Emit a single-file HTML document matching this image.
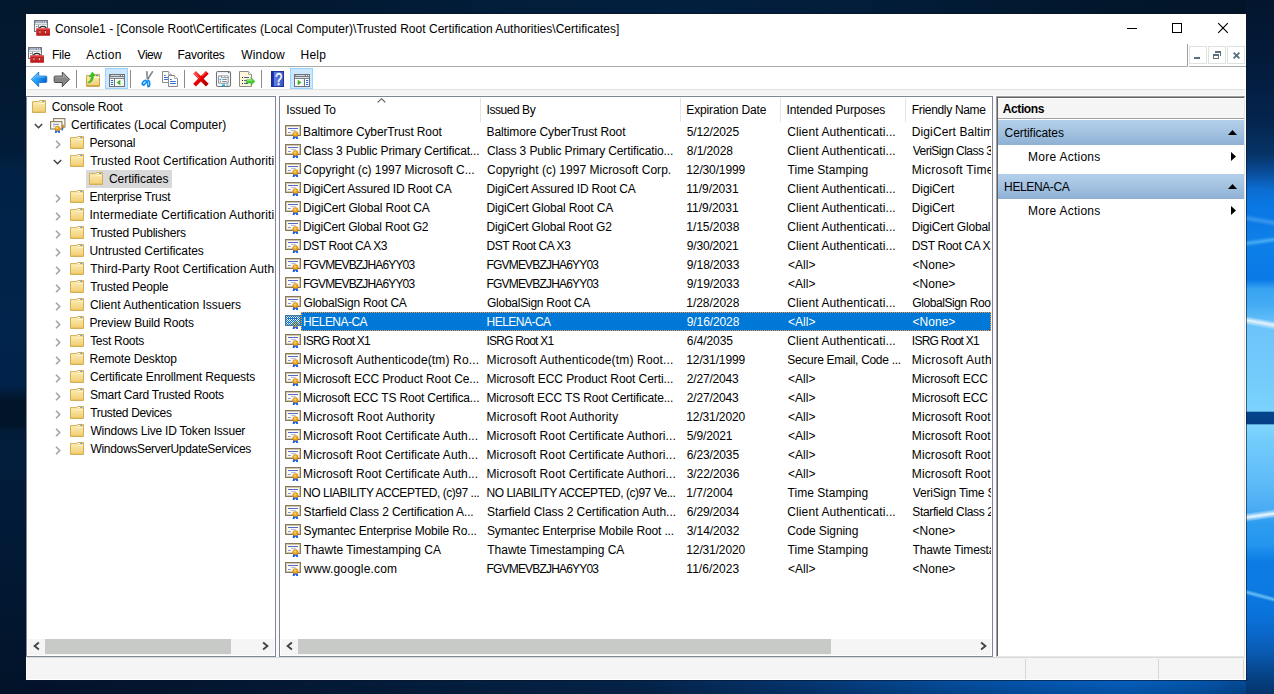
<!DOCTYPE html><html><head><meta charset="utf-8"><title>Console1</title><style>
html,body{margin:0;padding:0}
body{width:1274px;height:694px;overflow:hidden;position:relative;background:#02152b;font:12px "Liberation Sans",sans-serif;color:#000}
div,span,svg{position:absolute;box-sizing:border-box}
.t{white-space:pre;line-height:16px;height:16px}
.w{color:#fff}
.b{font-weight:bold}
.i{overflow:visible}
#bgT{left:0;top:0;width:1274px;height:14px;background:linear-gradient(90deg,#02182d 0,#02172c 200px,#021b36 400px,#021e3b 520px,#021f3e 700px,#021c38 900px,#02172c 1100px,#021428 1274px)}
#bgL{left:0;top:0;width:26px;height:694px;background:linear-gradient(180deg,#02182d 0,#021a33 100px,#021c3a 150px,#012246 175px,#012349 250px,#01244c 340px,#01224a 385px,#01172e 398px,#011427 402px,#011528 425px,#021c38 432px,#021d3c 445px,#021a36 550px,#02152c 650px,#021328 694px)}
#bgB{left:0;top:680px;width:1274px;height:14px;background:linear-gradient(180deg,rgba(0,0,0,0) 0,rgba(0,10,30,.18) 100%),linear-gradient(90deg,#03122a 0,#031a36 300px,#04244a 640px,#053670 800px,#054e9e 950px,#0459b4 1050px,#045fbe 1130px,#0457ae 1200px,#054a96 1246px,#043e7e 1274px)}
#bgR{left:1246px;top:0;width:28px;height:694px;overflow:hidden;background:linear-gradient(180deg,#04162e 0,#031a3a 60px,#04244e 120px,#063468 155px,#0a4c98 172px,#0c6cd0 189px,#0a78e4 206px,#0c7ae6 225px,#0e80e8 240px,#0c7ee8 255px,#0a7ae6 280px,#3aa4f2 289px,#44acf4 305px,#5cbaf7 318px,#6cc4fa 328px,#74ccfc 380px,#7ad2fd 410px,#80d4fd 411px,#04448c 412.5px,#053f85 423.5px,#82d6fe 425px,#72ccfc 440px,#60bcf8 480px,#4cacf4 508px,#38a2f1 518px,#2c9cf0 524px,#2496ee 545px,#1688ea 553px,#0c7ce4 562px,#0c7ae2 590px,#0a76de 601px,#0a74dc 612px,#0a68cc 632px,#0a5cb4 650px,#08509f 662px,#064488 675px,#053a78 685px,#04336c 694px)}
.sk{left:-4px;width:40px;transform-origin:4px 50%}
#win{left:26px;top:14px;width:1220px;height:666px;background:#fff;box-shadow:0 0 0 1px rgba(10,20,40,.6)}
</style></head><body>
<svg width="0" height="0" style="position:absolute">
<linearGradient id="gf" x1="0" y1="0" x2="0" y2="1"><stop offset="0" stop-color="#fdf0bd"/><stop offset="1" stop-color="#f0cc6e"/></linearGradient>
<linearGradient id="gb" x1="0" y1="0" x2="1" y2=".5"><stop offset="0" stop-color="#52bcff"/><stop offset=".5" stop-color="#22a0f6"/><stop offset="1" stop-color="#0660cc"/></linearGradient>
<linearGradient id="gg" x1="0" y1="0" x2="0" y2="1"><stop offset="0" stop-color="#a2a2a2"/><stop offset=".5" stop-color="#848484"/><stop offset="1" stop-color="#8e8e8e"/></linearGradient>
<linearGradient id="gr" x1="0" y1="0" x2="1" y2="1"><stop offset="0" stop-color="#ff4a4a"/><stop offset=".5" stop-color="#e60000"/><stop offset="1" stop-color="#a80000"/></linearGradient>
<linearGradient id="gh" x1="0" y1="0" x2="1" y2="0"><stop offset="0" stop-color="#1a2c9c"/><stop offset=".22" stop-color="#1f35b0"/><stop offset=".24" stop-color="#5d7fe6"/><stop offset="1" stop-color="#3453c8"/></linearGradient>
<linearGradient id="gt" x1="0" y1="0" x2="0" y2="1"><stop offset="0" stop-color="#e43a3a"/><stop offset="1" stop-color="#b81414"/></linearGradient>
<linearGradient id="ga" x1="0" y1="0" x2="0" y2="1"><stop offset="0" stop-color="#b0cdea"/><stop offset=".5" stop-color="#a3c3e4"/><stop offset="1" stop-color="#8caed5"/></linearGradient>
</svg>
<div id="bgT"></div><div id="bgB"></div><div id="bgL"></div><div id="bgR"><div class="sk" style="top:214px;height:8px;background:linear-gradient(180deg,rgba(70,160,240,0),rgba(70,160,240,.75) 50%,rgba(70,160,240,0));transform:skewY(10deg)"></div><div class="sk" style="top:240px;height:7px;background:linear-gradient(180deg,rgba(84,180,246,0),rgba(84,180,246,.8) 50%,rgba(84,180,246,0));transform:skewY(-8deg)"></div><div class="sk" style="top:316px;height:9px;background:linear-gradient(180deg,rgba(235,247,255,0),rgba(235,247,255,.95) 45%,rgba(235,247,255,0));transform:skewY(10deg)"></div><div class="sk" style="top:513px;height:9px;background:linear-gradient(180deg,rgba(240,250,255,0),rgba(240,250,255,.97) 50%,rgba(240,250,255,0));transform:skewY(-8deg)"></div><div class="sk" style="top:589px;height:6px;background:linear-gradient(180deg,rgba(120,200,250,0),rgba(120,200,250,.85) 50%,rgba(120,200,250,0));transform:skewY(15deg)"></div></div>
<div id="win"></div>
<svg class="i" style="left:34px;top:20px" width="16" height="16" viewBox="0 0 16 16" ><rect x=".5" y=".5" width="13" height="11" fill="#f6f7f9" stroke="#6f7780"/><rect x="1" y="1" width="12" height="2" fill="#8794aa"/><rect x="2" y="1.6" width="6" height=".8" fill="#dfe4ec"/><rect x="9" y="1.5" width="1" height="1" fill="#fff"/><rect x="11" y="1.5" width="1" height="1" fill="#fff"/><rect x="1" y="3" width="12" height="1" fill="#e3e6ea"/><rect x="1" y="4" width="12" height=".7" fill="#a7aeb8"/><rect x="4" y="4.7" width="1" height="6.3" fill="#8d96a0"/><rect x="2" y="6" width="1.4" height="1" fill="#6f7780"/><path d="M5.6 8.6Q5.6 6.4 8.9 6.4Q12.2 6.4 12.2 8.6" fill="none" stroke="#2c2c2c" stroke-width="1.2"/><rect x="2.2" y="8.3" width="13.8" height="7.5" rx=".7" fill="url(#gt)"/><rect x="2.4" y="8.4" width="13.4" height="1" fill="#e85a5a" opacity=".8"/><rect x="2.2" y="10.4" width="13.8" height=".6" fill="#9c1010" opacity=".7"/><rect x="5.3" y="10.6" width="1.2" height="2.7" fill="#e4e4e4" stroke="#7a1414" stroke-width=".3"/><rect x="10.9" y="10.6" width="1.2" height="2.7" fill="#e4e4e4" stroke="#7a1414" stroke-width=".3"/></svg>
<div style="left:1127px;top:28px;width:10px;height:1px;background:#000;"></div>
<div style="left:1172px;top:23px;width:10px;height:10px;background:transparent;border:1px solid #000"></div>
<svg class="i" style="left:1218px;top:23px" width="10" height="10" viewBox="0 0 10 10" ><path d="M.2 .2L9.8 9.8M9.8 .2L.2 9.8" stroke="#000" stroke-width="1.15"/></svg>
<svg class="i" style="left:28px;top:47px" width="16" height="16" viewBox="0 0 16 16" ><rect x=".5" y=".5" width="13" height="11" fill="#f6f7f9" stroke="#6f7780"/><rect x="1" y="1" width="12" height="2" fill="#8794aa"/><rect x="2" y="1.6" width="6" height=".8" fill="#dfe4ec"/><rect x="9" y="1.5" width="1" height="1" fill="#fff"/><rect x="11" y="1.5" width="1" height="1" fill="#fff"/><rect x="1" y="3" width="12" height="1" fill="#e3e6ea"/><rect x="1" y="4" width="12" height=".7" fill="#a7aeb8"/><rect x="4" y="4.7" width="1" height="6.3" fill="#8d96a0"/><rect x="2" y="6" width="1.4" height="1" fill="#6f7780"/><path d="M5.6 8.6Q5.6 6.4 8.9 6.4Q12.2 6.4 12.2 8.6" fill="none" stroke="#2c2c2c" stroke-width="1.2"/><rect x="2.2" y="8.3" width="13.8" height="7.5" rx=".7" fill="url(#gt)"/><rect x="2.4" y="8.4" width="13.4" height="1" fill="#e85a5a" opacity=".8"/><rect x="2.2" y="10.4" width="13.8" height=".6" fill="#9c1010" opacity=".7"/><rect x="5.3" y="10.6" width="1.2" height="2.7" fill="#e4e4e4" stroke="#7a1414" stroke-width=".3"/><rect x="10.9" y="10.6" width="1.2" height="2.7" fill="#e4e4e4" stroke="#7a1414" stroke-width=".3"/></svg>
<div style="left:26px;top:66px;width:1220px;height:1px;background:#a9ada9;"></div>
<div style="left:1187px;top:44px;width:1px;height:22px;background:#a0a0a0;"></div>
<div style="left:1188px;top:66px;width:1px;height:1px;background:#fff;"></div>
<div style="left:1189px;top:46px;width:18px;height:18px;background:#fff;border:1px solid #dde3de"></div>
<div style="left:1208px;top:46px;width:18px;height:18px;background:#fff;border:1px solid #dde3de"></div>
<div style="left:1227px;top:46px;width:18px;height:18px;background:#fff;border:1px solid #dde3de"></div>
<div style="left:1194px;top:57px;width:6px;height:2px;background:#5b6e7c;"></div>
<svg class="i" style="left:1213px;top:51px" width="8" height="8" viewBox="0 0 8 8" ><rect x="2" y="0" width="6" height="2" fill="#5b6e7c"/><rect x="7" y="0" width="1" height="5" fill="#5b6e7c"/><rect x="0" y="3" width="6" height="2" fill="#5b6e7c"/><rect x="0" y="3" width="1" height="5" fill="#5b6e7c"/><rect x="5" y="3" width="1" height="5" fill="#5b6e7c"/><rect x="0" y="7" width="6" height="1" fill="#5b6e7c"/></svg>
<svg class="i" style="left:1233px;top:52px" width="7" height="7" viewBox="0 0 7 7" ><path d="M.6 .6L6.4 6.4M6.4 .6L.6 6.4" stroke="#5b6e7c" stroke-width="1.8"/></svg>
<div style="left:27px;top:89px;width:1218px;height:1px;background:#dfe2df;"></div>
<div style="left:27px;top:90px;width:1218px;height:6px;background:#f5f5f5;"></div>
<svg class="i" style="left:31px;top:71px" width="16" height="16" viewBox="0 0 16 16" ><path d="M.4 8.3L7.7 1V5.1H14.8Q15.8 5.1 15.8 6.1V10.5Q15.8 11.5 14.8 11.5H7.7V15.7Z" fill="url(#gb)" stroke="#1b78d4" stroke-width=".9" stroke-linejoin="round"/><path d="M2 8.3L6.8 3.4V6H14.4" fill="none" stroke="#8fd2ff" stroke-width=".8" opacity=".85"/></svg>
<svg class="i" style="left:54px;top:71px" width="16" height="16" viewBox="0 0 16 16" ><path d="M15.6 8.3L8.3 1V5.1H1.2Q.2 5.1 .2 6.1V10.5Q.2 11.5 1.2 11.5H8.3V15.7Z" fill="url(#gg)" stroke="#484848" stroke-width="1" stroke-linejoin="round"/><path d="M1.4 6.1H9.2V3.4L14 8.3" fill="none" stroke="#c8c8c8" stroke-width=".7" opacity=".6"/></svg>
<div style="left:76px;top:70px;width:1px;height:18px;background:#8a8a8a;"></div>
<div style="left:130px;top:70px;width:1px;height:18px;background:#8a8a8a;"></div>
<div style="left:184px;top:70px;width:1px;height:18px;background:#8a8a8a;"></div>
<div style="left:261px;top:70px;width:1px;height:18px;background:#8a8a8a;"></div>
<svg class="i" style="left:86px;top:71px" width="16" height="16" viewBox="0 0 16 16" ><path d="M.5 4.5H7.8L8.8 3.3H13.5V15.3H.5Z" fill="url(#gf)" stroke="#cfa54c"/><path d="M1 14.8H13" stroke="#b98d33" stroke-width=".8"/><rect x="7.5" y="6" width="6" height=".9" fill="#fff6d2"/><rect x="9.7" y="4" width="2.6" height="1.1" fill="#3a8fe6"/><rect x="8.9" y="4" width="1" height="1.1" fill="#fff"/><path d="M1.8 11.4C4.4 10.6 5.3 8 5.2 5.3L3.2 5.9L6.3 .9L9.3 4.4L7.4 4.7C7.6 8.6 5.6 11.6 2.4 12Z" fill="#35c821" stroke="#2aa418" stroke-width=".5"/></svg>
<div style="left:105px;top:68px;width:23px;height:21px;background:#cce8ff;border:1px solid #99d1ff"></div>
<svg class="i" style="left:109px;top:74px" width="16" height="13" viewBox="0 0 16 13" ><rect x=".5" y=".5" width="15" height="12" fill="#fff" stroke="#6e7378"/><rect x="1" y="1" width="14" height="2" fill="#737b84"/><rect x="1.6" y="1.1" width="9.2" height=".9" fill="#dfe3e8"/><rect x="12" y="1" width="1" height="1" fill="#fff"/><rect x="14" y="1" width="1" height="1" fill="#fff"/><rect x="1" y="3" width="14" height="1" fill="#dadee4"/><rect x="1" y="4" width="14" height="1" fill="#7c838b"/><rect x="5" y="5" width="1" height="7" fill="#6e7378"/><rect x="1.8" y="6" width="2.4" height="1" fill="#2a6ad0"/><rect x="1.8" y="8" width="2.4" height="1" fill="#2a6ad0"/><rect x="1.8" y="10" width="2.4" height="1" fill="#2a6ad0"/><rect x="13" y="5" width="2" height="7" fill="#f1f1f1"/><path d="M11.2 5.9V11.1L7.8 8.5Z" fill="#3ab422" stroke="#2c9c18" stroke-width=".3"/></svg>
<svg class="i" style="left:142px;top:71px" width="12" height="16" viewBox="0 0 12 16" ><path d="M10.7 .4L5.6 8.4" stroke="#59606a" stroke-width="1.5" fill="none"/><path d="M10.5 .9L6.4 7.3" stroke="#f2f4f7" stroke-width=".7" stroke-dasharray=".9 .9"/><path d="M4.9 .3L5.5 8.4" stroke="#6c737c" stroke-width="1.7" fill="none"/><path d="M5.2 .6L5.7 7.6" stroke="#c9d0d8" stroke-width=".5" fill="none"/><ellipse cx="2.3" cy="11.6" rx="1.35" ry="2.6" transform="rotate(40 2.3 11.6)" fill="#fff" stroke="#1290f2" stroke-width="1.7"/><ellipse cx="6.6" cy="12.4" rx="1.1" ry="2.9" transform="rotate(-4 6.6 12.4)" fill="#fff" stroke="#1290f2" stroke-width="1.6"/><path d="M5 15.6Q6.6 16.4 7.9 15.2" fill="none" stroke="#0a5cae" stroke-width=".8"/><path d="M.4 13.2Q1.4 14.6 3 13.9" fill="none" stroke="#0a5cae" stroke-width=".7"/></svg>
<svg class="i" style="left:162px;top:71px" width="16" height="16" viewBox="0 0 16 16" ><path d="M0.5 0.5H6.5L9.5 3.5V11.5H0.5Z" fill="#fff" stroke="#8a8a8a"/><path d="M6.5 0.5V3.5H9.5" fill="#fff" stroke="#9a9a9a" stroke-width=".8"/><rect x="2" y="4" width="1.8" height="1" fill="#3a72d0"/><rect x="2" y="6" width="4.2" height="1" fill="#3a72d0"/><rect x="2" y="8" width="4.2" height="1" fill="#3a72d0"/><path d="M6.5 4.5H12.5L15.5 7.5V15.5H6.5Z" fill="#fff" stroke="#8a8a8a"/><path d="M12.5 4.5V7.5H15.5" fill="#fff" stroke="#9a9a9a" stroke-width=".8"/><rect x="8" y="8" width="1.8" height="1" fill="#3a72d0"/><rect x="8" y="10" width="5.8" height="1" fill="#3a72d0"/><rect x="8" y="12" width="5.8" height="1" fill="#3a72d0"/></svg>
<svg class="i" style="left:193px;top:71px" width="16" height="16" viewBox="0 0 16 16" ><path d="M1.5 1.4L14.3 14.1M14.3 1.4L1.5 14.1" stroke="url(#gr)" stroke-width="3.9"/><path d="M1.6 2.6L6.4 7.4M13 1.4L9.4 5" stroke="#ff9a9a" stroke-width=".9" opacity=".75"/></svg>
<svg class="i" style="left:216px;top:71px" width="15" height="16" viewBox="0 0 15 16" ><rect x=".5" y=".5" width="14" height="15" rx="1.6" fill="#fff" stroke="#6d727c" stroke-width="1.1"/><rect x="1.2" y="1.2" width="12.6" height=".9" fill="#e7ecf2"/><rect x="1.2" y="2.2" width="12.6" height=".8" fill="#f0f2f5"/><rect x="12" y="1" width="1.4" height="1.2" fill="#4a67b0"/><path d="M2.6 4.9H12.2V12.2H2.6Z" fill="#fafbfc" stroke="#7d838c" stroke-width=".9"/><path d="M5.5 4.9V6.6H12.2" fill="none" stroke="#7d838c" stroke-width=".9"/><rect x="6.3" y="5.3" width="2.2" height=".9" fill="#fff"/><rect x="9.3" y="5.3" width="2.2" height=".9" fill="#fff"/><rect x="8.6" y="4.9" width=".7" height="1.6" fill="#9aa0a8"/><circle cx="4.4" cy="8.5" r=".85" fill="#10a8f8"/><circle cx="4.4" cy="10.5" r=".6" fill="#8a8f8f"/><rect x="6.2" y="8" width="4.7" height="1" fill="#8a8f8f"/><rect x="6.2" y="10" width="4.7" height="1" fill="#8a8f8f"/><rect x="6" y="13.3" width="3" height="1.8" fill="#16b6f2"/><rect x="10.2" y="13.3" width="2.4" height="1.8" fill="#b9bcbc"/></svg>
<svg class="i" style="left:239px;top:71px" width="17" height="16" viewBox="0 0 17 16" ><path d="M.5 .5H9.5L12.5 3.5V15.5H.5Z" fill="#fdf8dc" stroke="#8c8c88"/><path d="M9.5 .5V3.5H12.5" fill="#fff" stroke="#9a9a96" stroke-width=".8"/><rect x="3" y="6" width="1" height="1" fill="#222"/><rect x="3" y="9" width="1" height="1" fill="#222"/><rect x="3" y="12" width="1" height="1" fill="#222"/><rect x="5" y="6" width="5" height="1" fill="#5a5aa8"/><rect x="5" y="9" width="3" height="1" fill="#5a5aa8"/><rect x="5" y="12" width="4" height="1" fill="#5a5aa8"/><path d="M7.2 8.8H12V6.4L16 10.4L12 14.2V12H7.2Z" fill="#48c832" stroke="#38b024" stroke-width=".5"/><path d="M8 9.6H12.6V8.2" fill="none" stroke="#a8ee98" stroke-width=".7"/></svg>
<svg class="i" style="left:271px;top:71px" width="13" height="16" viewBox="0 0 13 16" ><rect x="0" y="0" width="13" height="16" fill="url(#gh)"/><rect x=".4" y=".4" width="12.2" height="15.2" fill="none" stroke="#1a2a8a" stroke-width=".8"/><text x="8.2" y="14.3" font-family="Liberation Sans, sans-serif" font-size="16.5" fill="#1c2c80" text-anchor="middle" opacity=".5" transform="translate(8.2 0) scale(.76 1) translate(-8.2 0)">?</text><text x="7.7" y="13.9" font-family="Liberation Sans, sans-serif" font-size="16.5" fill="#fff" stroke="#fff" stroke-width=".5" text-anchor="middle" transform="translate(7.7 0) scale(.76 1) translate(-7.7 0)">?</text></svg>
<div style="left:290px;top:68px;width:23px;height:21px;background:#cce8ff;border:1px solid #99d1ff"></div>
<svg class="i" style="left:294px;top:74px" width="16" height="13" viewBox="0 0 16 13" ><rect x=".5" y=".5" width="15" height="12" fill="#fff" stroke="#6e7378"/><rect x="1" y="1" width="14" height="2" fill="#737b84"/><rect x="1.6" y="1.1" width="9.2" height=".9" fill="#dfe3e8"/><rect x="12" y="1" width="1" height="1" fill="#fff"/><rect x="14" y="1" width="1" height="1" fill="#fff"/><rect x="1" y="3" width="14" height="1" fill="#dadee4"/><rect x="1" y="4" width="14" height="1" fill="#7c838b"/><rect x="10" y="5" width="1" height="7" fill="#6e7378"/><rect x="12" y="6" width="2.3" height="1" fill="#2a6ad0"/><rect x="12" y="8" width="2.3" height="1" fill="#2a6ad0"/><rect x="12" y="10" width="2.3" height="1" fill="#2a6ad0"/><rect x="8" y="5" width="2" height="7" fill="#f1f1f1"/><path d="M3.9 5.9V11.1L7.2 8.5Z" fill="#3ab422" stroke="#2c9c18" stroke-width=".3"/></svg>
<div style="left:27px;top:95px;width:1218px;height:562px;background:#fafafa;"></div>
<div style="left:26px;top:96px;width:250px;height:561px;background:#fff;border:1px solid #7f8697"></div>
<div style="left:279px;top:96px;width:714px;height:561px;background:#fff;border:1px solid #7f8697"></div>
<div style="left:996px;top:96px;width:249px;height:561px;background:#fff;border-left:1px solid #a0a0a0;border-top:1px solid #a0a0a0;border-bottom:1px solid #e8e8e8"></div>
<div style="left:997px;top:97px;width:248px;height:559px;background:#fff;border-left:1px solid #646464;border-top:1px solid #646464"></div>
<div style="left:1244px;top:97px;width:1px;height:559px;background:#e3e3e3;"></div>
<div style="left:27px;top:657px;width:1218px;height:1px;background:#d5dcd6;"></div>
<div style="left:27px;top:658px;width:1218px;height:21px;background:#f5f5f5;"></div>
<div style="left:1025px;top:659px;width:1px;height:20px;background:#d3d9d4;"></div>
<div style="left:1158px;top:659px;width:1px;height:20px;background:#d3d9d4;"></div>
<div style="left:1243px;top:659px;width:1px;height:20px;background:#d3d9d4;"></div>
<div style="left:28px;top:639px;width:246px;height:16px;background:#f5f5f5;"></div>
<div style="left:45px;top:639px;width:186px;height:15px;background:#c8cac7;"></div>
<svg class="i" style="left:32.5px;top:642.3px" width="7" height="8" viewBox="0 0 7 8" ><path d="M5.9 .5L1.6 4L5.9 7.5" fill="none" stroke="#444" stroke-width="1.9"/></svg>
<svg class="i" style="left:262.2px;top:642.3px" width="7" height="8" viewBox="0 0 7 8" ><path d="M1.1 .5L5.4 4L1.1 7.5" fill="none" stroke="#444" stroke-width="1.9"/></svg>
<div style="left:281px;top:639px;width:710px;height:16px;background:#f5f5f5;"></div>
<div style="left:298px;top:639px;width:533px;height:15px;background:#c8cac7;"></div>
<svg class="i" style="left:285.5px;top:642.3px" width="7" height="8" viewBox="0 0 7 8" ><path d="M5.9 .5L1.6 4L5.9 7.5" fill="none" stroke="#444" stroke-width="1.9"/></svg>
<svg class="i" style="left:979.5px;top:642.3px" width="7" height="8" viewBox="0 0 7 8" ><path d="M1.1 .5L5.4 4L1.1 7.5" fill="none" stroke="#444" stroke-width="1.9"/></svg>
<div style="left:86px;top:170px;width:86px;height:18px;background:#d9d9d9;"></div>
<svg class="i" style="left:32px;top:100px" width="14" height="13" viewBox="0 0 14 13" ><path d="M.5 1.6H6.4L7.4 .5H13.5V12.5H.5Z" fill="url(#gf)" stroke="#d3ae57"/><rect x="7.3" y="1" width="5.7" height="1.9" fill="#efd385"/><rect x="6.8" y="2.8" width="6.2" height=".8" fill="#fff7d8"/><rect x="8" y="1" width="2.6" height=".9" fill="#fff"/><rect x="10.3" y="1" width="1.7" height=".9" fill="#3a8fe6"/><rect x="1" y="11.4" width="12" height=".7" fill="#e6bd5c"/></svg>
<svg class="i" style="left:50px;top:118px" width="16" height="15" viewBox="0 0 16 15" ><rect x="3.6" y=".6" width="11.3" height="8.4" fill="#fcfbf5" stroke="#8b7c5e" stroke-width="1.1"/><circle cx="12.6" cy="8.4" r="1.9" fill="#e69a18"/><path d="M11.6 9.5L11.4 12.5H12.6L13.6 9.5Z" fill="#1c5ce6"/><rect x=".6" y="3.6" width="11.3" height="7.4" fill="#fbfaf2" stroke="#8b7c5e" stroke-width="1.1"/><path d="M3 6.3H9" stroke="#6a7ccc" stroke-width=".9"/><path d="M3 8.2H5.2" stroke="#9aa6da" stroke-width=".9"/><path d="M5.4 11L5 15H6.4L7.5 13.3L8.6 15H10L9.6 11Z" fill="#1c5ce6"/><circle cx="7.5" cy="10.5" r="2.5" fill="#efa21a" stroke="#c88414" stroke-width=".5"/><circle cx="7.2" cy="10" r="1" fill="#f9d063"/></svg>
<svg class="i" style="left:34.0px;top:123px" width="9" height="6" viewBox="0 0 9 6" ><path d="M.8 1L4.5 4.7L8.2 1" fill="none" stroke="#404040" stroke-width="1.5"/></svg>
<svg class="i" style="left:70px;top:136px" width="14" height="13" viewBox="0 0 14 13" ><path d="M.5 1.6H6.4L7.4 .5H13.5V12.5H.5Z" fill="url(#gf)" stroke="#d3ae57"/><rect x="7.3" y="1" width="5.7" height="1.9" fill="#efd385"/><rect x="6.8" y="2.8" width="6.2" height=".8" fill="#fff7d8"/><rect x="8" y="1" width="2.6" height=".9" fill="#fff"/><rect x="10.3" y="1" width="1.7" height=".9" fill="#3a8fe6"/><rect x="1" y="11.4" width="12" height=".7" fill="#e6bd5c"/></svg>
<svg class="i" style="left:54.7px;top:139.9px" width="6" height="9" viewBox="0 0 6 9" ><path d="M1 .8L4.7 4.5L1 8.2" fill="none" stroke="#a2a5a2" stroke-width="1.6"/></svg>
<svg class="i" style="left:70px;top:154px" width="14" height="13" viewBox="0 0 14 13" ><path d="M.5 1.6H6.4L7.4 .5H13.5V12.5H.5Z" fill="url(#gf)" stroke="#d3ae57"/><rect x="7.3" y="1" width="5.7" height="1.9" fill="#efd385"/><rect x="6.8" y="2.8" width="6.2" height=".8" fill="#fff7d8"/><rect x="8" y="1" width="2.6" height=".9" fill="#fff"/><rect x="10.3" y="1" width="1.7" height=".9" fill="#3a8fe6"/><rect x="1" y="11.4" width="12" height=".7" fill="#e6bd5c"/></svg>
<svg class="i" style="left:53.2px;top:159px" width="9" height="6" viewBox="0 0 9 6" ><path d="M.8 1L4.5 4.7L8.2 1" fill="none" stroke="#404040" stroke-width="1.5"/></svg>
<svg class="i" style="left:89px;top:172px" width="14" height="13" viewBox="0 0 14 13" ><path d="M.5 1.6H6.4L7.4 .5H13.5V12.5H.5Z" fill="url(#gf)" stroke="#d3ae57"/><rect x="7.3" y="1" width="5.7" height="1.9" fill="#efd385"/><rect x="6.8" y="2.8" width="6.2" height=".8" fill="#fff7d8"/><rect x="8" y="1" width="2.6" height=".9" fill="#fff"/><rect x="10.3" y="1" width="1.7" height=".9" fill="#3a8fe6"/><rect x="1" y="11.4" width="12" height=".7" fill="#e6bd5c"/></svg>
<svg class="i" style="left:70px;top:190px" width="14" height="13" viewBox="0 0 14 13" ><path d="M.5 1.6H6.4L7.4 .5H13.5V12.5H.5Z" fill="url(#gf)" stroke="#d3ae57"/><rect x="7.3" y="1" width="5.7" height="1.9" fill="#efd385"/><rect x="6.8" y="2.8" width="6.2" height=".8" fill="#fff7d8"/><rect x="8" y="1" width="2.6" height=".9" fill="#fff"/><rect x="10.3" y="1" width="1.7" height=".9" fill="#3a8fe6"/><rect x="1" y="11.4" width="12" height=".7" fill="#e6bd5c"/></svg>
<svg class="i" style="left:54.7px;top:193.9px" width="6" height="9" viewBox="0 0 6 9" ><path d="M1 .8L4.7 4.5L1 8.2" fill="none" stroke="#a2a5a2" stroke-width="1.6"/></svg>
<svg class="i" style="left:70px;top:208px" width="14" height="13" viewBox="0 0 14 13" ><path d="M.5 1.6H6.4L7.4 .5H13.5V12.5H.5Z" fill="url(#gf)" stroke="#d3ae57"/><rect x="7.3" y="1" width="5.7" height="1.9" fill="#efd385"/><rect x="6.8" y="2.8" width="6.2" height=".8" fill="#fff7d8"/><rect x="8" y="1" width="2.6" height=".9" fill="#fff"/><rect x="10.3" y="1" width="1.7" height=".9" fill="#3a8fe6"/><rect x="1" y="11.4" width="12" height=".7" fill="#e6bd5c"/></svg>
<svg class="i" style="left:54.7px;top:211.9px" width="6" height="9" viewBox="0 0 6 9" ><path d="M1 .8L4.7 4.5L1 8.2" fill="none" stroke="#a2a5a2" stroke-width="1.6"/></svg>
<svg class="i" style="left:70px;top:226px" width="14" height="13" viewBox="0 0 14 13" ><path d="M.5 1.6H6.4L7.4 .5H13.5V12.5H.5Z" fill="url(#gf)" stroke="#d3ae57"/><rect x="7.3" y="1" width="5.7" height="1.9" fill="#efd385"/><rect x="6.8" y="2.8" width="6.2" height=".8" fill="#fff7d8"/><rect x="8" y="1" width="2.6" height=".9" fill="#fff"/><rect x="10.3" y="1" width="1.7" height=".9" fill="#3a8fe6"/><rect x="1" y="11.4" width="12" height=".7" fill="#e6bd5c"/></svg>
<svg class="i" style="left:54.7px;top:229.9px" width="6" height="9" viewBox="0 0 6 9" ><path d="M1 .8L4.7 4.5L1 8.2" fill="none" stroke="#a2a5a2" stroke-width="1.6"/></svg>
<svg class="i" style="left:70px;top:244px" width="14" height="13" viewBox="0 0 14 13" ><path d="M.5 1.6H6.4L7.4 .5H13.5V12.5H.5Z" fill="url(#gf)" stroke="#d3ae57"/><rect x="7.3" y="1" width="5.7" height="1.9" fill="#efd385"/><rect x="6.8" y="2.8" width="6.2" height=".8" fill="#fff7d8"/><rect x="8" y="1" width="2.6" height=".9" fill="#fff"/><rect x="10.3" y="1" width="1.7" height=".9" fill="#3a8fe6"/><rect x="1" y="11.4" width="12" height=".7" fill="#e6bd5c"/></svg>
<svg class="i" style="left:54.7px;top:247.9px" width="6" height="9" viewBox="0 0 6 9" ><path d="M1 .8L4.7 4.5L1 8.2" fill="none" stroke="#a2a5a2" stroke-width="1.6"/></svg>
<svg class="i" style="left:70px;top:262px" width="14" height="13" viewBox="0 0 14 13" ><path d="M.5 1.6H6.4L7.4 .5H13.5V12.5H.5Z" fill="url(#gf)" stroke="#d3ae57"/><rect x="7.3" y="1" width="5.7" height="1.9" fill="#efd385"/><rect x="6.8" y="2.8" width="6.2" height=".8" fill="#fff7d8"/><rect x="8" y="1" width="2.6" height=".9" fill="#fff"/><rect x="10.3" y="1" width="1.7" height=".9" fill="#3a8fe6"/><rect x="1" y="11.4" width="12" height=".7" fill="#e6bd5c"/></svg>
<svg class="i" style="left:54.7px;top:265.9px" width="6" height="9" viewBox="0 0 6 9" ><path d="M1 .8L4.7 4.5L1 8.2" fill="none" stroke="#a2a5a2" stroke-width="1.6"/></svg>
<svg class="i" style="left:70px;top:280px" width="14" height="13" viewBox="0 0 14 13" ><path d="M.5 1.6H6.4L7.4 .5H13.5V12.5H.5Z" fill="url(#gf)" stroke="#d3ae57"/><rect x="7.3" y="1" width="5.7" height="1.9" fill="#efd385"/><rect x="6.8" y="2.8" width="6.2" height=".8" fill="#fff7d8"/><rect x="8" y="1" width="2.6" height=".9" fill="#fff"/><rect x="10.3" y="1" width="1.7" height=".9" fill="#3a8fe6"/><rect x="1" y="11.4" width="12" height=".7" fill="#e6bd5c"/></svg>
<svg class="i" style="left:54.7px;top:283.9px" width="6" height="9" viewBox="0 0 6 9" ><path d="M1 .8L4.7 4.5L1 8.2" fill="none" stroke="#a2a5a2" stroke-width="1.6"/></svg>
<svg class="i" style="left:70px;top:298px" width="14" height="13" viewBox="0 0 14 13" ><path d="M.5 1.6H6.4L7.4 .5H13.5V12.5H.5Z" fill="url(#gf)" stroke="#d3ae57"/><rect x="7.3" y="1" width="5.7" height="1.9" fill="#efd385"/><rect x="6.8" y="2.8" width="6.2" height=".8" fill="#fff7d8"/><rect x="8" y="1" width="2.6" height=".9" fill="#fff"/><rect x="10.3" y="1" width="1.7" height=".9" fill="#3a8fe6"/><rect x="1" y="11.4" width="12" height=".7" fill="#e6bd5c"/></svg>
<svg class="i" style="left:54.7px;top:301.9px" width="6" height="9" viewBox="0 0 6 9" ><path d="M1 .8L4.7 4.5L1 8.2" fill="none" stroke="#a2a5a2" stroke-width="1.6"/></svg>
<svg class="i" style="left:70px;top:316px" width="14" height="13" viewBox="0 0 14 13" ><path d="M.5 1.6H6.4L7.4 .5H13.5V12.5H.5Z" fill="url(#gf)" stroke="#d3ae57"/><rect x="7.3" y="1" width="5.7" height="1.9" fill="#efd385"/><rect x="6.8" y="2.8" width="6.2" height=".8" fill="#fff7d8"/><rect x="8" y="1" width="2.6" height=".9" fill="#fff"/><rect x="10.3" y="1" width="1.7" height=".9" fill="#3a8fe6"/><rect x="1" y="11.4" width="12" height=".7" fill="#e6bd5c"/></svg>
<svg class="i" style="left:54.7px;top:319.9px" width="6" height="9" viewBox="0 0 6 9" ><path d="M1 .8L4.7 4.5L1 8.2" fill="none" stroke="#a2a5a2" stroke-width="1.6"/></svg>
<svg class="i" style="left:70px;top:334px" width="14" height="13" viewBox="0 0 14 13" ><path d="M.5 1.6H6.4L7.4 .5H13.5V12.5H.5Z" fill="url(#gf)" stroke="#d3ae57"/><rect x="7.3" y="1" width="5.7" height="1.9" fill="#efd385"/><rect x="6.8" y="2.8" width="6.2" height=".8" fill="#fff7d8"/><rect x="8" y="1" width="2.6" height=".9" fill="#fff"/><rect x="10.3" y="1" width="1.7" height=".9" fill="#3a8fe6"/><rect x="1" y="11.4" width="12" height=".7" fill="#e6bd5c"/></svg>
<svg class="i" style="left:54.7px;top:337.9px" width="6" height="9" viewBox="0 0 6 9" ><path d="M1 .8L4.7 4.5L1 8.2" fill="none" stroke="#a2a5a2" stroke-width="1.6"/></svg>
<svg class="i" style="left:70px;top:352px" width="14" height="13" viewBox="0 0 14 13" ><path d="M.5 1.6H6.4L7.4 .5H13.5V12.5H.5Z" fill="url(#gf)" stroke="#d3ae57"/><rect x="7.3" y="1" width="5.7" height="1.9" fill="#efd385"/><rect x="6.8" y="2.8" width="6.2" height=".8" fill="#fff7d8"/><rect x="8" y="1" width="2.6" height=".9" fill="#fff"/><rect x="10.3" y="1" width="1.7" height=".9" fill="#3a8fe6"/><rect x="1" y="11.4" width="12" height=".7" fill="#e6bd5c"/></svg>
<svg class="i" style="left:54.7px;top:355.9px" width="6" height="9" viewBox="0 0 6 9" ><path d="M1 .8L4.7 4.5L1 8.2" fill="none" stroke="#a2a5a2" stroke-width="1.6"/></svg>
<svg class="i" style="left:70px;top:370px" width="14" height="13" viewBox="0 0 14 13" ><path d="M.5 1.6H6.4L7.4 .5H13.5V12.5H.5Z" fill="url(#gf)" stroke="#d3ae57"/><rect x="7.3" y="1" width="5.7" height="1.9" fill="#efd385"/><rect x="6.8" y="2.8" width="6.2" height=".8" fill="#fff7d8"/><rect x="8" y="1" width="2.6" height=".9" fill="#fff"/><rect x="10.3" y="1" width="1.7" height=".9" fill="#3a8fe6"/><rect x="1" y="11.4" width="12" height=".7" fill="#e6bd5c"/></svg>
<svg class="i" style="left:54.7px;top:373.9px" width="6" height="9" viewBox="0 0 6 9" ><path d="M1 .8L4.7 4.5L1 8.2" fill="none" stroke="#a2a5a2" stroke-width="1.6"/></svg>
<svg class="i" style="left:70px;top:388px" width="14" height="13" viewBox="0 0 14 13" ><path d="M.5 1.6H6.4L7.4 .5H13.5V12.5H.5Z" fill="url(#gf)" stroke="#d3ae57"/><rect x="7.3" y="1" width="5.7" height="1.9" fill="#efd385"/><rect x="6.8" y="2.8" width="6.2" height=".8" fill="#fff7d8"/><rect x="8" y="1" width="2.6" height=".9" fill="#fff"/><rect x="10.3" y="1" width="1.7" height=".9" fill="#3a8fe6"/><rect x="1" y="11.4" width="12" height=".7" fill="#e6bd5c"/></svg>
<svg class="i" style="left:54.7px;top:391.9px" width="6" height="9" viewBox="0 0 6 9" ><path d="M1 .8L4.7 4.5L1 8.2" fill="none" stroke="#a2a5a2" stroke-width="1.6"/></svg>
<svg class="i" style="left:70px;top:406px" width="14" height="13" viewBox="0 0 14 13" ><path d="M.5 1.6H6.4L7.4 .5H13.5V12.5H.5Z" fill="url(#gf)" stroke="#d3ae57"/><rect x="7.3" y="1" width="5.7" height="1.9" fill="#efd385"/><rect x="6.8" y="2.8" width="6.2" height=".8" fill="#fff7d8"/><rect x="8" y="1" width="2.6" height=".9" fill="#fff"/><rect x="10.3" y="1" width="1.7" height=".9" fill="#3a8fe6"/><rect x="1" y="11.4" width="12" height=".7" fill="#e6bd5c"/></svg>
<svg class="i" style="left:54.7px;top:409.9px" width="6" height="9" viewBox="0 0 6 9" ><path d="M1 .8L4.7 4.5L1 8.2" fill="none" stroke="#a2a5a2" stroke-width="1.6"/></svg>
<svg class="i" style="left:70px;top:424px" width="14" height="13" viewBox="0 0 14 13" ><path d="M.5 1.6H6.4L7.4 .5H13.5V12.5H.5Z" fill="url(#gf)" stroke="#d3ae57"/><rect x="7.3" y="1" width="5.7" height="1.9" fill="#efd385"/><rect x="6.8" y="2.8" width="6.2" height=".8" fill="#fff7d8"/><rect x="8" y="1" width="2.6" height=".9" fill="#fff"/><rect x="10.3" y="1" width="1.7" height=".9" fill="#3a8fe6"/><rect x="1" y="11.4" width="12" height=".7" fill="#e6bd5c"/></svg>
<svg class="i" style="left:54.7px;top:427.9px" width="6" height="9" viewBox="0 0 6 9" ><path d="M1 .8L4.7 4.5L1 8.2" fill="none" stroke="#a2a5a2" stroke-width="1.6"/></svg>
<svg class="i" style="left:70px;top:442px" width="14" height="13" viewBox="0 0 14 13" ><path d="M.5 1.6H6.4L7.4 .5H13.5V12.5H.5Z" fill="url(#gf)" stroke="#d3ae57"/><rect x="7.3" y="1" width="5.7" height="1.9" fill="#efd385"/><rect x="6.8" y="2.8" width="6.2" height=".8" fill="#fff7d8"/><rect x="8" y="1" width="2.6" height=".9" fill="#fff"/><rect x="10.3" y="1" width="1.7" height=".9" fill="#3a8fe6"/><rect x="1" y="11.4" width="12" height=".7" fill="#e6bd5c"/></svg>
<svg class="i" style="left:54.7px;top:445.9px" width="6" height="9" viewBox="0 0 6 9" ><path d="M1 .8L4.7 4.5L1 8.2" fill="none" stroke="#a2a5a2" stroke-width="1.6"/></svg>
<div style="left:480px;top:98px;width:1px;height:24px;background:#e5e5e5;"></div>
<div style="left:680px;top:98px;width:1px;height:24px;background:#e5e5e5;"></div>
<div style="left:780px;top:98px;width:1px;height:24px;background:#e5e5e5;"></div>
<div style="left:905px;top:98px;width:1px;height:24px;background:#e5e5e5;"></div>
<svg class="i" style="left:376.5px;top:98px" width="9" height="5" viewBox="0 0 9 5" ><path d="M.7 4.3L4.5 .7L8.3 4.3" fill="none" stroke="#585858" stroke-width="1.15"/></svg>
<div style="left:301px;top:312px;width:690px;height:19px;background:#0078d7;outline:1px dotted #ff9436;outline-offset:-1px"></div>
<svg class="i" style="left:285px;top:125px" width="16" height="14" viewBox="0 0 16 14" ><rect x=".5" y=".5" width="15" height="10" fill="#fcfbf4" stroke="#877859" stroke-width="1"/><rect x="1.5" y="1.5" width="13" height="8" fill="none" stroke="#cfc7b2" stroke-width="1"/><rect x="3" y="3" width="10" height="1" fill="#536ac6"/><rect x="6" y="5" width="4.6" height="1" fill="#b4bce2"/><rect x="3" y="7" width="2.7" height="1" fill="#8592d4"/><path d="M8.3 10.5L7.6 14H9.4L10.4 12.6L11.4 14H13.2L12.5 10.5Z" fill="#1a5ae8"/><circle cx="10.4" cy="9.1" r="2.7" fill="#eea31c" stroke="#c98716" stroke-width=".5"/><circle cx="10.1" cy="8.6" r="1.2" fill="#f8ce60"/></svg>
<svg class="i" style="left:285px;top:144px" width="16" height="14" viewBox="0 0 16 14" ><rect x=".5" y=".5" width="15" height="10" fill="#fcfbf4" stroke="#877859" stroke-width="1"/><rect x="1.5" y="1.5" width="13" height="8" fill="none" stroke="#cfc7b2" stroke-width="1"/><rect x="3" y="3" width="10" height="1" fill="#536ac6"/><rect x="6" y="5" width="4.6" height="1" fill="#b4bce2"/><rect x="3" y="7" width="2.7" height="1" fill="#8592d4"/><path d="M8.3 10.5L7.6 14H9.4L10.4 12.6L11.4 14H13.2L12.5 10.5Z" fill="#1a5ae8"/><circle cx="10.4" cy="9.1" r="2.7" fill="#eea31c" stroke="#c98716" stroke-width=".5"/><circle cx="10.1" cy="8.6" r="1.2" fill="#f8ce60"/></svg>
<svg class="i" style="left:285px;top:163px" width="16" height="14" viewBox="0 0 16 14" ><rect x=".5" y=".5" width="15" height="10" fill="#fcfbf4" stroke="#877859" stroke-width="1"/><rect x="1.5" y="1.5" width="13" height="8" fill="none" stroke="#cfc7b2" stroke-width="1"/><rect x="3" y="3" width="10" height="1" fill="#536ac6"/><rect x="6" y="5" width="4.6" height="1" fill="#b4bce2"/><rect x="3" y="7" width="2.7" height="1" fill="#8592d4"/><path d="M8.3 10.5L7.6 14H9.4L10.4 12.6L11.4 14H13.2L12.5 10.5Z" fill="#1a5ae8"/><circle cx="10.4" cy="9.1" r="2.7" fill="#eea31c" stroke="#c98716" stroke-width=".5"/><circle cx="10.1" cy="8.6" r="1.2" fill="#f8ce60"/></svg>
<svg class="i" style="left:285px;top:182px" width="16" height="14" viewBox="0 0 16 14" ><rect x=".5" y=".5" width="15" height="10" fill="#fcfbf4" stroke="#877859" stroke-width="1"/><rect x="1.5" y="1.5" width="13" height="8" fill="none" stroke="#cfc7b2" stroke-width="1"/><rect x="3" y="3" width="10" height="1" fill="#536ac6"/><rect x="6" y="5" width="4.6" height="1" fill="#b4bce2"/><rect x="3" y="7" width="2.7" height="1" fill="#8592d4"/><path d="M8.3 10.5L7.6 14H9.4L10.4 12.6L11.4 14H13.2L12.5 10.5Z" fill="#1a5ae8"/><circle cx="10.4" cy="9.1" r="2.7" fill="#eea31c" stroke="#c98716" stroke-width=".5"/><circle cx="10.1" cy="8.6" r="1.2" fill="#f8ce60"/></svg>
<svg class="i" style="left:285px;top:201px" width="16" height="14" viewBox="0 0 16 14" ><rect x=".5" y=".5" width="15" height="10" fill="#fcfbf4" stroke="#877859" stroke-width="1"/><rect x="1.5" y="1.5" width="13" height="8" fill="none" stroke="#cfc7b2" stroke-width="1"/><rect x="3" y="3" width="10" height="1" fill="#536ac6"/><rect x="6" y="5" width="4.6" height="1" fill="#b4bce2"/><rect x="3" y="7" width="2.7" height="1" fill="#8592d4"/><path d="M8.3 10.5L7.6 14H9.4L10.4 12.6L11.4 14H13.2L12.5 10.5Z" fill="#1a5ae8"/><circle cx="10.4" cy="9.1" r="2.7" fill="#eea31c" stroke="#c98716" stroke-width=".5"/><circle cx="10.1" cy="8.6" r="1.2" fill="#f8ce60"/></svg>
<svg class="i" style="left:285px;top:220px" width="16" height="14" viewBox="0 0 16 14" ><rect x=".5" y=".5" width="15" height="10" fill="#fcfbf4" stroke="#877859" stroke-width="1"/><rect x="1.5" y="1.5" width="13" height="8" fill="none" stroke="#cfc7b2" stroke-width="1"/><rect x="3" y="3" width="10" height="1" fill="#536ac6"/><rect x="6" y="5" width="4.6" height="1" fill="#b4bce2"/><rect x="3" y="7" width="2.7" height="1" fill="#8592d4"/><path d="M8.3 10.5L7.6 14H9.4L10.4 12.6L11.4 14H13.2L12.5 10.5Z" fill="#1a5ae8"/><circle cx="10.4" cy="9.1" r="2.7" fill="#eea31c" stroke="#c98716" stroke-width=".5"/><circle cx="10.1" cy="8.6" r="1.2" fill="#f8ce60"/></svg>
<svg class="i" style="left:285px;top:239px" width="16" height="14" viewBox="0 0 16 14" ><rect x=".5" y=".5" width="15" height="10" fill="#fcfbf4" stroke="#877859" stroke-width="1"/><rect x="1.5" y="1.5" width="13" height="8" fill="none" stroke="#cfc7b2" stroke-width="1"/><rect x="3" y="3" width="10" height="1" fill="#536ac6"/><rect x="6" y="5" width="4.6" height="1" fill="#b4bce2"/><rect x="3" y="7" width="2.7" height="1" fill="#8592d4"/><path d="M8.3 10.5L7.6 14H9.4L10.4 12.6L11.4 14H13.2L12.5 10.5Z" fill="#1a5ae8"/><circle cx="10.4" cy="9.1" r="2.7" fill="#eea31c" stroke="#c98716" stroke-width=".5"/><circle cx="10.1" cy="8.6" r="1.2" fill="#f8ce60"/></svg>
<svg class="i" style="left:285px;top:258px" width="16" height="14" viewBox="0 0 16 14" ><rect x=".5" y=".5" width="15" height="10" fill="#fcfbf4" stroke="#877859" stroke-width="1"/><rect x="1.5" y="1.5" width="13" height="8" fill="none" stroke="#cfc7b2" stroke-width="1"/><rect x="3" y="3" width="10" height="1" fill="#536ac6"/><rect x="6" y="5" width="4.6" height="1" fill="#b4bce2"/><rect x="3" y="7" width="2.7" height="1" fill="#8592d4"/><path d="M8.3 10.5L7.6 14H9.4L10.4 12.6L11.4 14H13.2L12.5 10.5Z" fill="#1a5ae8"/><circle cx="10.4" cy="9.1" r="2.7" fill="#eea31c" stroke="#c98716" stroke-width=".5"/><circle cx="10.1" cy="8.6" r="1.2" fill="#f8ce60"/></svg>
<svg class="i" style="left:285px;top:277px" width="16" height="14" viewBox="0 0 16 14" ><rect x=".5" y=".5" width="15" height="10" fill="#fcfbf4" stroke="#877859" stroke-width="1"/><rect x="1.5" y="1.5" width="13" height="8" fill="none" stroke="#cfc7b2" stroke-width="1"/><rect x="3" y="3" width="10" height="1" fill="#536ac6"/><rect x="6" y="5" width="4.6" height="1" fill="#b4bce2"/><rect x="3" y="7" width="2.7" height="1" fill="#8592d4"/><path d="M8.3 10.5L7.6 14H9.4L10.4 12.6L11.4 14H13.2L12.5 10.5Z" fill="#1a5ae8"/><circle cx="10.4" cy="9.1" r="2.7" fill="#eea31c" stroke="#c98716" stroke-width=".5"/><circle cx="10.1" cy="8.6" r="1.2" fill="#f8ce60"/></svg>
<svg class="i" style="left:285px;top:296px" width="16" height="14" viewBox="0 0 16 14" ><rect x=".5" y=".5" width="15" height="10" fill="#fcfbf4" stroke="#877859" stroke-width="1"/><rect x="1.5" y="1.5" width="13" height="8" fill="none" stroke="#cfc7b2" stroke-width="1"/><rect x="3" y="3" width="10" height="1" fill="#536ac6"/><rect x="6" y="5" width="4.6" height="1" fill="#b4bce2"/><rect x="3" y="7" width="2.7" height="1" fill="#8592d4"/><path d="M8.3 10.5L7.6 14H9.4L10.4 12.6L11.4 14H13.2L12.5 10.5Z" fill="#1a5ae8"/><circle cx="10.4" cy="9.1" r="2.7" fill="#eea31c" stroke="#c98716" stroke-width=".5"/><circle cx="10.1" cy="8.6" r="1.2" fill="#f8ce60"/></svg>
<svg class="i" style="left:285px;top:315px" width="16" height="14" viewBox="0 0 16 14" ><rect x=".5" y=".5" width="15" height="10" fill="#fcfbf4" stroke="#877859" stroke-width="1"/><rect x="1.5" y="1.5" width="13" height="8" fill="none" stroke="#cfc7b2" stroke-width="1"/><rect x="3" y="3" width="10" height="1" fill="#536ac6"/><rect x="6" y="5" width="4.6" height="1" fill="#b4bce2"/><rect x="3" y="7" width="2.7" height="1" fill="#8592d4"/><path d="M8.3 10.5L7.6 14H9.4L10.4 12.6L11.4 14H13.2L12.5 10.5Z" fill="#1a5ae8"/><circle cx="10.4" cy="9.1" r="2.7" fill="#eea31c" stroke="#c98716" stroke-width=".5"/><circle cx="10.1" cy="8.6" r="1.2" fill="#f8ce60"/></svg>
<svg class="i" style="left:285px;top:334px" width="16" height="14" viewBox="0 0 16 14" ><rect x=".5" y=".5" width="15" height="10" fill="#fcfbf4" stroke="#877859" stroke-width="1"/><rect x="1.5" y="1.5" width="13" height="8" fill="none" stroke="#cfc7b2" stroke-width="1"/><rect x="3" y="3" width="10" height="1" fill="#536ac6"/><rect x="6" y="5" width="4.6" height="1" fill="#b4bce2"/><rect x="3" y="7" width="2.7" height="1" fill="#8592d4"/><path d="M8.3 10.5L7.6 14H9.4L10.4 12.6L11.4 14H13.2L12.5 10.5Z" fill="#1a5ae8"/><circle cx="10.4" cy="9.1" r="2.7" fill="#eea31c" stroke="#c98716" stroke-width=".5"/><circle cx="10.1" cy="8.6" r="1.2" fill="#f8ce60"/></svg>
<svg class="i" style="left:285px;top:353px" width="16" height="14" viewBox="0 0 16 14" ><rect x=".5" y=".5" width="15" height="10" fill="#fcfbf4" stroke="#877859" stroke-width="1"/><rect x="1.5" y="1.5" width="13" height="8" fill="none" stroke="#cfc7b2" stroke-width="1"/><rect x="3" y="3" width="10" height="1" fill="#536ac6"/><rect x="6" y="5" width="4.6" height="1" fill="#b4bce2"/><rect x="3" y="7" width="2.7" height="1" fill="#8592d4"/><path d="M8.3 10.5L7.6 14H9.4L10.4 12.6L11.4 14H13.2L12.5 10.5Z" fill="#1a5ae8"/><circle cx="10.4" cy="9.1" r="2.7" fill="#eea31c" stroke="#c98716" stroke-width=".5"/><circle cx="10.1" cy="8.6" r="1.2" fill="#f8ce60"/></svg>
<svg class="i" style="left:285px;top:372px" width="16" height="14" viewBox="0 0 16 14" ><rect x=".5" y=".5" width="15" height="10" fill="#fcfbf4" stroke="#877859" stroke-width="1"/><rect x="1.5" y="1.5" width="13" height="8" fill="none" stroke="#cfc7b2" stroke-width="1"/><rect x="3" y="3" width="10" height="1" fill="#536ac6"/><rect x="6" y="5" width="4.6" height="1" fill="#b4bce2"/><rect x="3" y="7" width="2.7" height="1" fill="#8592d4"/><path d="M8.3 10.5L7.6 14H9.4L10.4 12.6L11.4 14H13.2L12.5 10.5Z" fill="#1a5ae8"/><circle cx="10.4" cy="9.1" r="2.7" fill="#eea31c" stroke="#c98716" stroke-width=".5"/><circle cx="10.1" cy="8.6" r="1.2" fill="#f8ce60"/></svg>
<svg class="i" style="left:285px;top:391px" width="16" height="14" viewBox="0 0 16 14" ><rect x=".5" y=".5" width="15" height="10" fill="#fcfbf4" stroke="#877859" stroke-width="1"/><rect x="1.5" y="1.5" width="13" height="8" fill="none" stroke="#cfc7b2" stroke-width="1"/><rect x="3" y="3" width="10" height="1" fill="#536ac6"/><rect x="6" y="5" width="4.6" height="1" fill="#b4bce2"/><rect x="3" y="7" width="2.7" height="1" fill="#8592d4"/><path d="M8.3 10.5L7.6 14H9.4L10.4 12.6L11.4 14H13.2L12.5 10.5Z" fill="#1a5ae8"/><circle cx="10.4" cy="9.1" r="2.7" fill="#eea31c" stroke="#c98716" stroke-width=".5"/><circle cx="10.1" cy="8.6" r="1.2" fill="#f8ce60"/></svg>
<svg class="i" style="left:285px;top:410px" width="16" height="14" viewBox="0 0 16 14" ><rect x=".5" y=".5" width="15" height="10" fill="#fcfbf4" stroke="#877859" stroke-width="1"/><rect x="1.5" y="1.5" width="13" height="8" fill="none" stroke="#cfc7b2" stroke-width="1"/><rect x="3" y="3" width="10" height="1" fill="#536ac6"/><rect x="6" y="5" width="4.6" height="1" fill="#b4bce2"/><rect x="3" y="7" width="2.7" height="1" fill="#8592d4"/><path d="M8.3 10.5L7.6 14H9.4L10.4 12.6L11.4 14H13.2L12.5 10.5Z" fill="#1a5ae8"/><circle cx="10.4" cy="9.1" r="2.7" fill="#eea31c" stroke="#c98716" stroke-width=".5"/><circle cx="10.1" cy="8.6" r="1.2" fill="#f8ce60"/></svg>
<svg class="i" style="left:285px;top:429px" width="16" height="14" viewBox="0 0 16 14" ><rect x=".5" y=".5" width="15" height="10" fill="#fcfbf4" stroke="#877859" stroke-width="1"/><rect x="1.5" y="1.5" width="13" height="8" fill="none" stroke="#cfc7b2" stroke-width="1"/><rect x="3" y="3" width="10" height="1" fill="#536ac6"/><rect x="6" y="5" width="4.6" height="1" fill="#b4bce2"/><rect x="3" y="7" width="2.7" height="1" fill="#8592d4"/><path d="M8.3 10.5L7.6 14H9.4L10.4 12.6L11.4 14H13.2L12.5 10.5Z" fill="#1a5ae8"/><circle cx="10.4" cy="9.1" r="2.7" fill="#eea31c" stroke="#c98716" stroke-width=".5"/><circle cx="10.1" cy="8.6" r="1.2" fill="#f8ce60"/></svg>
<svg class="i" style="left:285px;top:448px" width="16" height="14" viewBox="0 0 16 14" ><rect x=".5" y=".5" width="15" height="10" fill="#fcfbf4" stroke="#877859" stroke-width="1"/><rect x="1.5" y="1.5" width="13" height="8" fill="none" stroke="#cfc7b2" stroke-width="1"/><rect x="3" y="3" width="10" height="1" fill="#536ac6"/><rect x="6" y="5" width="4.6" height="1" fill="#b4bce2"/><rect x="3" y="7" width="2.7" height="1" fill="#8592d4"/><path d="M8.3 10.5L7.6 14H9.4L10.4 12.6L11.4 14H13.2L12.5 10.5Z" fill="#1a5ae8"/><circle cx="10.4" cy="9.1" r="2.7" fill="#eea31c" stroke="#c98716" stroke-width=".5"/><circle cx="10.1" cy="8.6" r="1.2" fill="#f8ce60"/></svg>
<svg class="i" style="left:285px;top:467px" width="16" height="14" viewBox="0 0 16 14" ><rect x=".5" y=".5" width="15" height="10" fill="#fcfbf4" stroke="#877859" stroke-width="1"/><rect x="1.5" y="1.5" width="13" height="8" fill="none" stroke="#cfc7b2" stroke-width="1"/><rect x="3" y="3" width="10" height="1" fill="#536ac6"/><rect x="6" y="5" width="4.6" height="1" fill="#b4bce2"/><rect x="3" y="7" width="2.7" height="1" fill="#8592d4"/><path d="M8.3 10.5L7.6 14H9.4L10.4 12.6L11.4 14H13.2L12.5 10.5Z" fill="#1a5ae8"/><circle cx="10.4" cy="9.1" r="2.7" fill="#eea31c" stroke="#c98716" stroke-width=".5"/><circle cx="10.1" cy="8.6" r="1.2" fill="#f8ce60"/></svg>
<svg class="i" style="left:285px;top:486px" width="16" height="14" viewBox="0 0 16 14" ><rect x=".5" y=".5" width="15" height="10" fill="#fcfbf4" stroke="#877859" stroke-width="1"/><rect x="1.5" y="1.5" width="13" height="8" fill="none" stroke="#cfc7b2" stroke-width="1"/><rect x="3" y="3" width="10" height="1" fill="#536ac6"/><rect x="6" y="5" width="4.6" height="1" fill="#b4bce2"/><rect x="3" y="7" width="2.7" height="1" fill="#8592d4"/><path d="M8.3 10.5L7.6 14H9.4L10.4 12.6L11.4 14H13.2L12.5 10.5Z" fill="#1a5ae8"/><circle cx="10.4" cy="9.1" r="2.7" fill="#eea31c" stroke="#c98716" stroke-width=".5"/><circle cx="10.1" cy="8.6" r="1.2" fill="#f8ce60"/></svg>
<svg class="i" style="left:285px;top:505px" width="16" height="14" viewBox="0 0 16 14" ><rect x=".5" y=".5" width="15" height="10" fill="#fcfbf4" stroke="#877859" stroke-width="1"/><rect x="1.5" y="1.5" width="13" height="8" fill="none" stroke="#cfc7b2" stroke-width="1"/><rect x="3" y="3" width="10" height="1" fill="#536ac6"/><rect x="6" y="5" width="4.6" height="1" fill="#b4bce2"/><rect x="3" y="7" width="2.7" height="1" fill="#8592d4"/><path d="M8.3 10.5L7.6 14H9.4L10.4 12.6L11.4 14H13.2L12.5 10.5Z" fill="#1a5ae8"/><circle cx="10.4" cy="9.1" r="2.7" fill="#eea31c" stroke="#c98716" stroke-width=".5"/><circle cx="10.1" cy="8.6" r="1.2" fill="#f8ce60"/></svg>
<svg class="i" style="left:285px;top:524px" width="16" height="14" viewBox="0 0 16 14" ><rect x=".5" y=".5" width="15" height="10" fill="#fcfbf4" stroke="#877859" stroke-width="1"/><rect x="1.5" y="1.5" width="13" height="8" fill="none" stroke="#cfc7b2" stroke-width="1"/><rect x="3" y="3" width="10" height="1" fill="#536ac6"/><rect x="6" y="5" width="4.6" height="1" fill="#b4bce2"/><rect x="3" y="7" width="2.7" height="1" fill="#8592d4"/><path d="M8.3 10.5L7.6 14H9.4L10.4 12.6L11.4 14H13.2L12.5 10.5Z" fill="#1a5ae8"/><circle cx="10.4" cy="9.1" r="2.7" fill="#eea31c" stroke="#c98716" stroke-width=".5"/><circle cx="10.1" cy="8.6" r="1.2" fill="#f8ce60"/></svg>
<svg class="i" style="left:285px;top:543px" width="16" height="14" viewBox="0 0 16 14" ><rect x=".5" y=".5" width="15" height="10" fill="#fcfbf4" stroke="#877859" stroke-width="1"/><rect x="1.5" y="1.5" width="13" height="8" fill="none" stroke="#cfc7b2" stroke-width="1"/><rect x="3" y="3" width="10" height="1" fill="#536ac6"/><rect x="6" y="5" width="4.6" height="1" fill="#b4bce2"/><rect x="3" y="7" width="2.7" height="1" fill="#8592d4"/><path d="M8.3 10.5L7.6 14H9.4L10.4 12.6L11.4 14H13.2L12.5 10.5Z" fill="#1a5ae8"/><circle cx="10.4" cy="9.1" r="2.7" fill="#eea31c" stroke="#c98716" stroke-width=".5"/><circle cx="10.1" cy="8.6" r="1.2" fill="#f8ce60"/></svg>
<svg class="i" style="left:285px;top:562px" width="16" height="14" viewBox="0 0 16 14" ><rect x=".5" y=".5" width="15" height="10" fill="#fcfbf4" stroke="#877859" stroke-width="1"/><rect x="1.5" y="1.5" width="13" height="8" fill="none" stroke="#cfc7b2" stroke-width="1"/><rect x="3" y="3" width="10" height="1" fill="#536ac6"/><rect x="6" y="5" width="4.6" height="1" fill="#b4bce2"/><rect x="3" y="7" width="2.7" height="1" fill="#8592d4"/><path d="M8.3 10.5L7.6 14H9.4L10.4 12.6L11.4 14H13.2L12.5 10.5Z" fill="#1a5ae8"/><circle cx="10.4" cy="9.1" r="2.7" fill="#eea31c" stroke="#c98716" stroke-width=".5"/><circle cx="10.1" cy="8.6" r="1.2" fill="#f8ce60"/></svg>
<div style="left:285px;top:315px;width:16px;height:11px;background:repeating-conic-gradient(#0078d7 0 25%,transparent 0 50%) 0 0/2px 2px;"></div>
<div style="left:998px;top:99px;width:246px;height:19px;background:#f5f5f5;"></div>
<div style="left:998px;top:118px;width:246px;height:1px;background:#a0a0a0;"></div>
<div style="left:998px;top:120px;width:246px;height:25px;background:linear-gradient(180deg,#b3cfea 0,#a3c2e1 50%,#8fb0d4 100%);"></div>
<div style="left:998px;top:174px;width:246px;height:25px;background:linear-gradient(180deg,#b3cfea 0,#a3c2e1 50%,#8fb0d4 100%);"></div>
<svg class="i" style="left:1228px;top:130px" width="9" height="5" viewBox="0 0 9 5" ><path d="M0 5L4.5 0L9 5Z" fill="#000"/></svg>
<svg class="i" style="left:1228px;top:184px" width="9" height="5" viewBox="0 0 9 5" ><path d="M0 5L4.5 0L9 5Z" fill="#000"/></svg>
<svg class="i" style="left:1231px;top:152.0px" width="5" height="9" viewBox="0 0 5 9" ><path d="M0 0L5 4.5L0 9Z" fill="#000"/></svg>
<svg class="i" style="left:1231px;top:206.0px" width="5" height="9" viewBox="0 0 5 9" ><path d="M0 0L5 4.5L0 9Z" fill="#000"/></svg>
<span class="t" style="left:54.90px;top:21px;letter-spacing:0.025px;">Console1 - [Console Root\Certificates (Local Computer)\Trusted Root Certification Authorities\Certificates]</span>
<span class="t" style="left:51.90px;top:47px;letter-spacing:-0.150px;">File</span>
<span class="t" style="left:86.30px;top:47px;letter-spacing:0.380px;">Action</span>
<span class="t" style="left:137.60px;top:47px;letter-spacing:-0.483px;">View</span>
<span class="t" style="left:177.50px;top:47px;letter-spacing:-0.250px;">Favorites</span>
<span class="t" style="left:241.30px;top:47px;letter-spacing:0.150px;">Window</span>
<span class="t" style="left:300.60px;top:47px;letter-spacing:0.217px;">Help</span>
<span class="t" style="left:51.80px;top:99px;letter-spacing:-0.168px;">Console Root</span>
<span class="t" style="left:71.00px;top:117px;letter-spacing:-0.030px;">Certificates (Local Computer)</span>
<span class="t" style="left:89.40px;top:135px;letter-spacing:-0.200px;">Personal</span>
<span class="t" style="left:90.15px;top:153px;letter-spacing:0.047px;width:183.85px;overflow:hidden;">Trusted Root Certification Authorities</span>
<span class="t" style="left:109.00px;top:171px;letter-spacing:-0.055px;">Certificates</span>
<span class="t" style="left:89.40px;top:189px;letter-spacing:-0.237px;">Enterprise Trust</span>
<span class="t" style="left:89.40px;top:207px;letter-spacing:0.133px;width:184.60px;overflow:hidden;">Intermediate Certification Authorities</span>
<span class="t" style="left:90.15px;top:225px;letter-spacing:-0.218px;">Trusted Publishers</span>
<span class="t" style="left:89.40px;top:243px;letter-spacing:-0.043px;">Untrusted Certificates</span>
<span class="t" style="left:90.15px;top:261px;letter-spacing:0.056px;width:183.85px;overflow:hidden;">Third-Party Root Certification Authorities</span>
<span class="t" style="left:90.15px;top:279px;letter-spacing:-0.212px;">Trusted People</span>
<span class="t" style="left:89.90px;top:297px;letter-spacing:-0.007px;">Client Authentication Issuers</span>
<span class="t" style="left:89.40px;top:315px;letter-spacing:-0.156px;">Preview Build Roots</span>
<span class="t" style="left:90.15px;top:333px;letter-spacing:-0.289px;">Test Roots</span>
<span class="t" style="left:89.40px;top:351px;letter-spacing:-0.138px;">Remote Desktop</span>
<span class="t" style="left:89.90px;top:369px;letter-spacing:-0.115px;">Certificate Enrollment Requests</span>
<span class="t" style="left:89.90px;top:387px;letter-spacing:-0.226px;">Smart Card Trusted Roots</span>
<span class="t" style="left:90.15px;top:405px;letter-spacing:-0.321px;">Trusted Devices</span>
<span class="t" style="left:90.40px;top:423px;letter-spacing:-0.206px;">Windows Live ID Token Issuer</span>
<span class="t" style="left:90.40px;top:441px;letter-spacing:-0.302px;">WindowsServerUpdateServices</span>
<span class="t" style="left:286.30px;top:102px;letter-spacing:-0.181px;">Issued To</span>
<span class="t" style="left:486.50px;top:102px;letter-spacing:-0.438px;">Issued By</span>
<span class="t" style="left:686.30px;top:102px;letter-spacing:-0.143px;">Expiration Date</span>
<span class="t" style="left:786.60px;top:102px;letter-spacing:-0.128px;">Intended Purposes</span>
<span class="t" style="left:911.80px;top:102px;letter-spacing:-0.325px;">Friendly Name</span>
<span class="t" style="left:303.10px;top:124px;letter-spacing:-0.121px;">Baltimore CyberTrust Root</span>
<span class="t" style="left:486.50px;top:124px;letter-spacing:-0.108px;">Baltimore CyberTrust Root</span>
<span class="t" style="left:686.80px;top:124px;letter-spacing:-0.138px;">5/12/2025</span>
<span class="t" style="left:787.30px;top:124px;letter-spacing:0.110px;">Client Authenticati...</span>
<span class="t" style="left:911.80px;top:124px;letter-spacing:0.104px;width:79.20px;overflow:hidden;">DigiCert Baltimore Root</span>
<span class="t" style="left:303.60px;top:143px;letter-spacing:-0.156px;">Class 3 Public Primary Certificat...</span>
<span class="t" style="left:487.00px;top:143px;letter-spacing:-0.120px;">Class 3 Public Primary Certificatio...</span>
<span class="t" style="left:686.80px;top:143px;letter-spacing:-0.079px;">8/1/2028</span>
<span class="t" style="left:787.30px;top:143px;letter-spacing:0.110px;">Client Authenticati...</span>
<span class="t" style="left:912.80px;top:143px;letter-spacing:-0.527px;width:78.20px;overflow:hidden;">VeriSign Class 3 Public Primary CA</span>
<span class="t" style="left:303.60px;top:162px;letter-spacing:-0.055px;">Copyright (c) 1997 Microsoft C...</span>
<span class="t" style="left:487.00px;top:162px;letter-spacing:0.023px;">Copyright (c) 1997 Microsoft Corp.</span>
<span class="t" style="left:686.30px;top:162px;letter-spacing:-0.133px;">12/30/1999</span>
<span class="t" style="left:787.55px;top:162px;letter-spacing:0.038px;">Time Stamping</span>
<span class="t" style="left:911.80px;top:162px;letter-spacing:0.275px;width:79.20px;overflow:hidden;">Microsoft Timestamp Root</span>
<span class="t" style="left:303.10px;top:181px;letter-spacing:-0.212px;">DigiCert Assured ID Root CA</span>
<span class="t" style="left:486.50px;top:181px;letter-spacing:-0.181px;">DigiCert Assured ID Root CA</span>
<span class="t" style="left:686.30px;top:181px;letter-spacing:-0.025px;">11/9/2031</span>
<span class="t" style="left:787.30px;top:181px;letter-spacing:0.110px;">Client Authenticati...</span>
<span class="t" style="left:911.80px;top:181px;letter-spacing:-0.107px;">DigiCert</span>
<span class="t" style="left:303.10px;top:200px;letter-spacing:-0.150px;">DigiCert Global Root CA</span>
<span class="t" style="left:486.50px;top:200px;letter-spacing:-0.150px;">DigiCert Global Root CA</span>
<span class="t" style="left:686.30px;top:200px;letter-spacing:-0.025px;">11/9/2031</span>
<span class="t" style="left:787.30px;top:200px;letter-spacing:0.110px;">Client Authenticati...</span>
<span class="t" style="left:911.80px;top:200px;letter-spacing:-0.107px;">DigiCert</span>
<span class="t" style="left:303.10px;top:219px;letter-spacing:-0.180px;">DigiCert Global Root G2</span>
<span class="t" style="left:486.50px;top:219px;letter-spacing:-0.180px;">DigiCert Global Root G2</span>
<span class="t" style="left:686.30px;top:219px;letter-spacing:-0.044px;">1/15/2038</span>
<span class="t" style="left:787.30px;top:219px;letter-spacing:0.110px;">Client Authenticati...</span>
<span class="t" style="left:911.80px;top:219px;letter-spacing:-0.188px;width:79.20px;overflow:hidden;">DigiCert Global Root G2</span>
<span class="t" style="left:303.10px;top:238px;letter-spacing:-0.419px;">DST Root CA X3</span>
<span class="t" style="left:486.50px;top:238px;letter-spacing:-0.419px;">DST Root CA X3</span>
<span class="t" style="left:686.80px;top:238px;letter-spacing:-0.181px;">9/30/2021</span>
<span class="t" style="left:787.30px;top:238px;letter-spacing:0.110px;">Client Authenticati...</span>
<span class="t" style="left:911.80px;top:238px;letter-spacing:-0.362px;width:79.20px;overflow:hidden;">DST Root CA X3</span>
<span class="t" style="left:303.10px;top:257px;letter-spacing:-0.850px;">FGVMEVBZJHA6YY03</span>
<span class="t" style="left:486.50px;top:257px;letter-spacing:-0.817px;">FGVMEVBZJHA6YY03</span>
<span class="t" style="left:686.80px;top:257px;letter-spacing:-0.106px;">9/18/2033</span>
<span class="t" style="left:787.90px;top:257px;letter-spacing:0.088px;">&lt;All&gt;</span>
<span class="t" style="left:912.50px;top:257px;letter-spacing:0.030px;">&lt;None&gt;</span>
<span class="t" style="left:303.10px;top:276px;letter-spacing:-0.850px;">FGVMEVBZJHA6YY03</span>
<span class="t" style="left:486.50px;top:276px;letter-spacing:-0.817px;">FGVMEVBZJHA6YY03</span>
<span class="t" style="left:686.80px;top:276px;letter-spacing:-0.106px;">9/19/2033</span>
<span class="t" style="left:787.90px;top:276px;letter-spacing:0.088px;">&lt;All&gt;</span>
<span class="t" style="left:912.50px;top:276px;letter-spacing:0.030px;">&lt;None&gt;</span>
<span class="t" style="left:303.60px;top:295px;letter-spacing:-0.244px;">GlobalSign Root CA</span>
<span class="t" style="left:487.00px;top:295px;letter-spacing:-0.244px;">GlobalSign Root CA</span>
<span class="t" style="left:686.30px;top:295px;letter-spacing:-0.044px;">1/28/2028</span>
<span class="t" style="left:787.30px;top:295px;letter-spacing:0.110px;">Client Authenticati...</span>
<span class="t" style="left:912.30px;top:295px;letter-spacing:-0.417px;width:78.70px;overflow:hidden;">GlobalSign Root CA - R1</span>
<span class="t w" style="left:303.10px;top:314px;letter-spacing:-0.519px;">HELENA-CA</span>
<span class="t w" style="left:486.50px;top:314px;letter-spacing:-0.519px;">HELENA-CA</span>
<span class="t w" style="left:686.80px;top:314px;letter-spacing:-0.106px;">9/16/2028</span>
<span class="t w" style="left:787.90px;top:314px;letter-spacing:0.088px;">&lt;All&gt;</span>
<span class="t w" style="left:912.50px;top:314px;letter-spacing:0.030px;">&lt;None&gt;</span>
<span class="t" style="left:303.10px;top:333px;letter-spacing:-0.764px;">ISRG Root X1</span>
<span class="t" style="left:486.50px;top:333px;letter-spacing:-0.764px;">ISRG Root X1</span>
<span class="t" style="left:686.80px;top:333px;letter-spacing:-0.079px;">6/4/2035</span>
<span class="t" style="left:787.30px;top:333px;letter-spacing:0.110px;">Client Authenticati...</span>
<span class="t" style="left:911.80px;top:333px;letter-spacing:-0.736px;">ISRG Root X1</span>
<span class="t" style="left:303.10px;top:352px;letter-spacing:0.147px;">Microsoft Authenticode(tm) Ro...</span>
<span class="t" style="left:486.50px;top:352px;letter-spacing:0.168px;">Microsoft Authenticode(tm) Root...</span>
<span class="t" style="left:686.30px;top:352px;letter-spacing:-0.133px;">12/31/1999</span>
<span class="t" style="left:787.30px;top:352px;letter-spacing:-0.300px;">Secure Email, Code ...</span>
<span class="t" style="left:911.80px;top:352px;letter-spacing:0.288px;width:79.20px;overflow:hidden;">Microsoft Authenticode(tm) Root</span>
<span class="t" style="left:303.10px;top:371px;letter-spacing:-0.111px;">Microsoft ECC Product Root Ce...</span>
<span class="t" style="left:486.50px;top:371px;letter-spacing:-0.072px;">Microsoft ECC Product Root Certi...</span>
<span class="t" style="left:686.80px;top:371px;letter-spacing:-0.181px;">2/27/2043</span>
<span class="t" style="left:787.90px;top:371px;letter-spacing:0.088px;">&lt;All&gt;</span>
<span class="t" style="left:911.80px;top:371px;letter-spacing:-0.104px;width:79.20px;overflow:hidden;">Microsoft ECC Product Root</span>
<span class="t" style="left:303.10px;top:390px;letter-spacing:-0.165px;">Microsoft ECC TS Root Certifica...</span>
<span class="t" style="left:486.50px;top:390px;letter-spacing:-0.141px;">Microsoft ECC TS Root Certificate...</span>
<span class="t" style="left:686.80px;top:390px;letter-spacing:-0.181px;">2/27/2043</span>
<span class="t" style="left:787.90px;top:390px;letter-spacing:0.088px;">&lt;All&gt;</span>
<span class="t" style="left:911.80px;top:390px;letter-spacing:-0.104px;width:79.20px;overflow:hidden;">Microsoft ECC TS Root</span>
<span class="t" style="left:303.10px;top:409px;letter-spacing:0.185px;">Microsoft Root Authority</span>
<span class="t" style="left:486.50px;top:409px;letter-spacing:0.185px;">Microsoft Root Authority</span>
<span class="t" style="left:686.30px;top:409px;letter-spacing:-0.133px;">12/31/2020</span>
<span class="t" style="left:787.90px;top:409px;letter-spacing:0.088px;">&lt;All&gt;</span>
<span class="t" style="left:911.80px;top:409px;letter-spacing:0.112px;width:79.20px;overflow:hidden;">Microsoft Root Authority</span>
<span class="t" style="left:303.10px;top:428px;letter-spacing:0.088px;">Microsoft Root Certificate Auth...</span>
<span class="t" style="left:486.50px;top:428px;letter-spacing:0.107px;">Microsoft Root Certificate Authori...</span>
<span class="t" style="left:686.80px;top:428px;letter-spacing:-0.164px;">5/9/2021</span>
<span class="t" style="left:787.90px;top:428px;letter-spacing:0.088px;">&lt;All&gt;</span>
<span class="t" style="left:911.80px;top:428px;letter-spacing:0.112px;width:79.20px;overflow:hidden;">Microsoft Root Certificate Authority</span>
<span class="t" style="left:303.10px;top:447px;letter-spacing:0.088px;">Microsoft Root Certificate Auth...</span>
<span class="t" style="left:486.50px;top:447px;letter-spacing:0.107px;">Microsoft Root Certificate Authori...</span>
<span class="t" style="left:686.80px;top:447px;letter-spacing:-0.138px;">6/23/2035</span>
<span class="t" style="left:787.90px;top:447px;letter-spacing:0.088px;">&lt;All&gt;</span>
<span class="t" style="left:911.80px;top:447px;letter-spacing:0.112px;width:79.20px;overflow:hidden;">Microsoft Root Certificate Authority 2010</span>
<span class="t" style="left:303.10px;top:466px;letter-spacing:0.088px;">Microsoft Root Certificate Auth...</span>
<span class="t" style="left:486.50px;top:466px;letter-spacing:0.107px;">Microsoft Root Certificate Authori...</span>
<span class="t" style="left:686.80px;top:466px;letter-spacing:-0.106px;">3/22/2036</span>
<span class="t" style="left:787.90px;top:466px;letter-spacing:0.088px;">&lt;All&gt;</span>
<span class="t" style="left:911.80px;top:466px;letter-spacing:0.112px;width:79.20px;overflow:hidden;">Microsoft Root Certificate Authority 2011</span>
<span class="t" style="left:303.10px;top:485px;letter-spacing:-0.471px;">NO LIABILITY ACCEPTED, (c)97 ...</span>
<span class="t" style="left:486.50px;top:485px;letter-spacing:-0.483px;">NO LIABILITY ACCEPTED, (c)97 Ve...</span>
<span class="t" style="left:686.30px;top:485px;letter-spacing:0.000px;">1/7/2004</span>
<span class="t" style="left:787.55px;top:485px;letter-spacing:0.038px;">Time Stamping</span>
<span class="t" style="left:912.80px;top:485px;letter-spacing:-0.192px;width:78.20px;overflow:hidden;">VeriSign Time Stamping CA</span>
<span class="t" style="left:303.60px;top:504px;letter-spacing:-0.133px;">Starfield Class 2 Certification A...</span>
<span class="t" style="left:487.00px;top:504px;letter-spacing:-0.064px;">Starfield Class 2 Certification Auth...</span>
<span class="t" style="left:686.80px;top:504px;letter-spacing:-0.138px;">6/29/2034</span>
<span class="t" style="left:787.30px;top:504px;letter-spacing:0.110px;">Client Authenticati...</span>
<span class="t" style="left:912.30px;top:504px;letter-spacing:-0.357px;width:78.70px;overflow:hidden;">Starfield Class 2 Certification Authority</span>
<span class="t" style="left:303.60px;top:523px;letter-spacing:-0.176px;">Symantec Enterprise Mobile Ro...</span>
<span class="t" style="left:487.00px;top:523px;letter-spacing:-0.147px;">Symantec Enterprise Mobile Root ...</span>
<span class="t" style="left:686.80px;top:523px;letter-spacing:-0.106px;">3/14/2032</span>
<span class="t" style="left:787.30px;top:523px;letter-spacing:-0.095px;">Code Signing</span>
<span class="t" style="left:912.50px;top:523px;letter-spacing:0.030px;">&lt;None&gt;</span>
<span class="t" style="left:303.85px;top:542px;letter-spacing:-0.014px;">Thawte Timestamping CA</span>
<span class="t" style="left:487.25px;top:542px;letter-spacing:-0.014px;">Thawte Timestamping CA</span>
<span class="t" style="left:686.30px;top:542px;letter-spacing:-0.133px;">12/31/2020</span>
<span class="t" style="left:787.55px;top:542px;letter-spacing:0.038px;">Time Stamping</span>
<span class="t" style="left:912.55px;top:542px;letter-spacing:-0.138px;width:78.45px;overflow:hidden;">Thawte Timestamping CA</span>
<span class="t" style="left:304.10px;top:561px;letter-spacing:0.177px;">www.google.com</span>
<span class="t" style="left:486.50px;top:561px;letter-spacing:-0.817px;">FGVMEVBZJHA6YY03</span>
<span class="t" style="left:686.30px;top:561px;letter-spacing:0.050px;">11/6/2023</span>
<span class="t" style="left:787.90px;top:561px;letter-spacing:0.088px;">&lt;All&gt;</span>
<span class="t" style="left:912.50px;top:561px;letter-spacing:0.030px;">&lt;None&gt;</span>
<span class="t b" style="left:1002.75px;top:101px;letter-spacing:-0.392px;">Actions</span>
<span class="t" style="left:1004.60px;top:125px;letter-spacing:-0.064px;">Certificates</span>
<span class="t" style="left:1028.10px;top:149px;letter-spacing:0.255px;">More Actions</span>
<span class="t" style="left:1004.10px;top:179px;letter-spacing:-0.381px;">HELENA-CA</span>
<span class="t" style="left:1028.10px;top:203px;letter-spacing:0.255px;">More Actions</span>
</body></html>
